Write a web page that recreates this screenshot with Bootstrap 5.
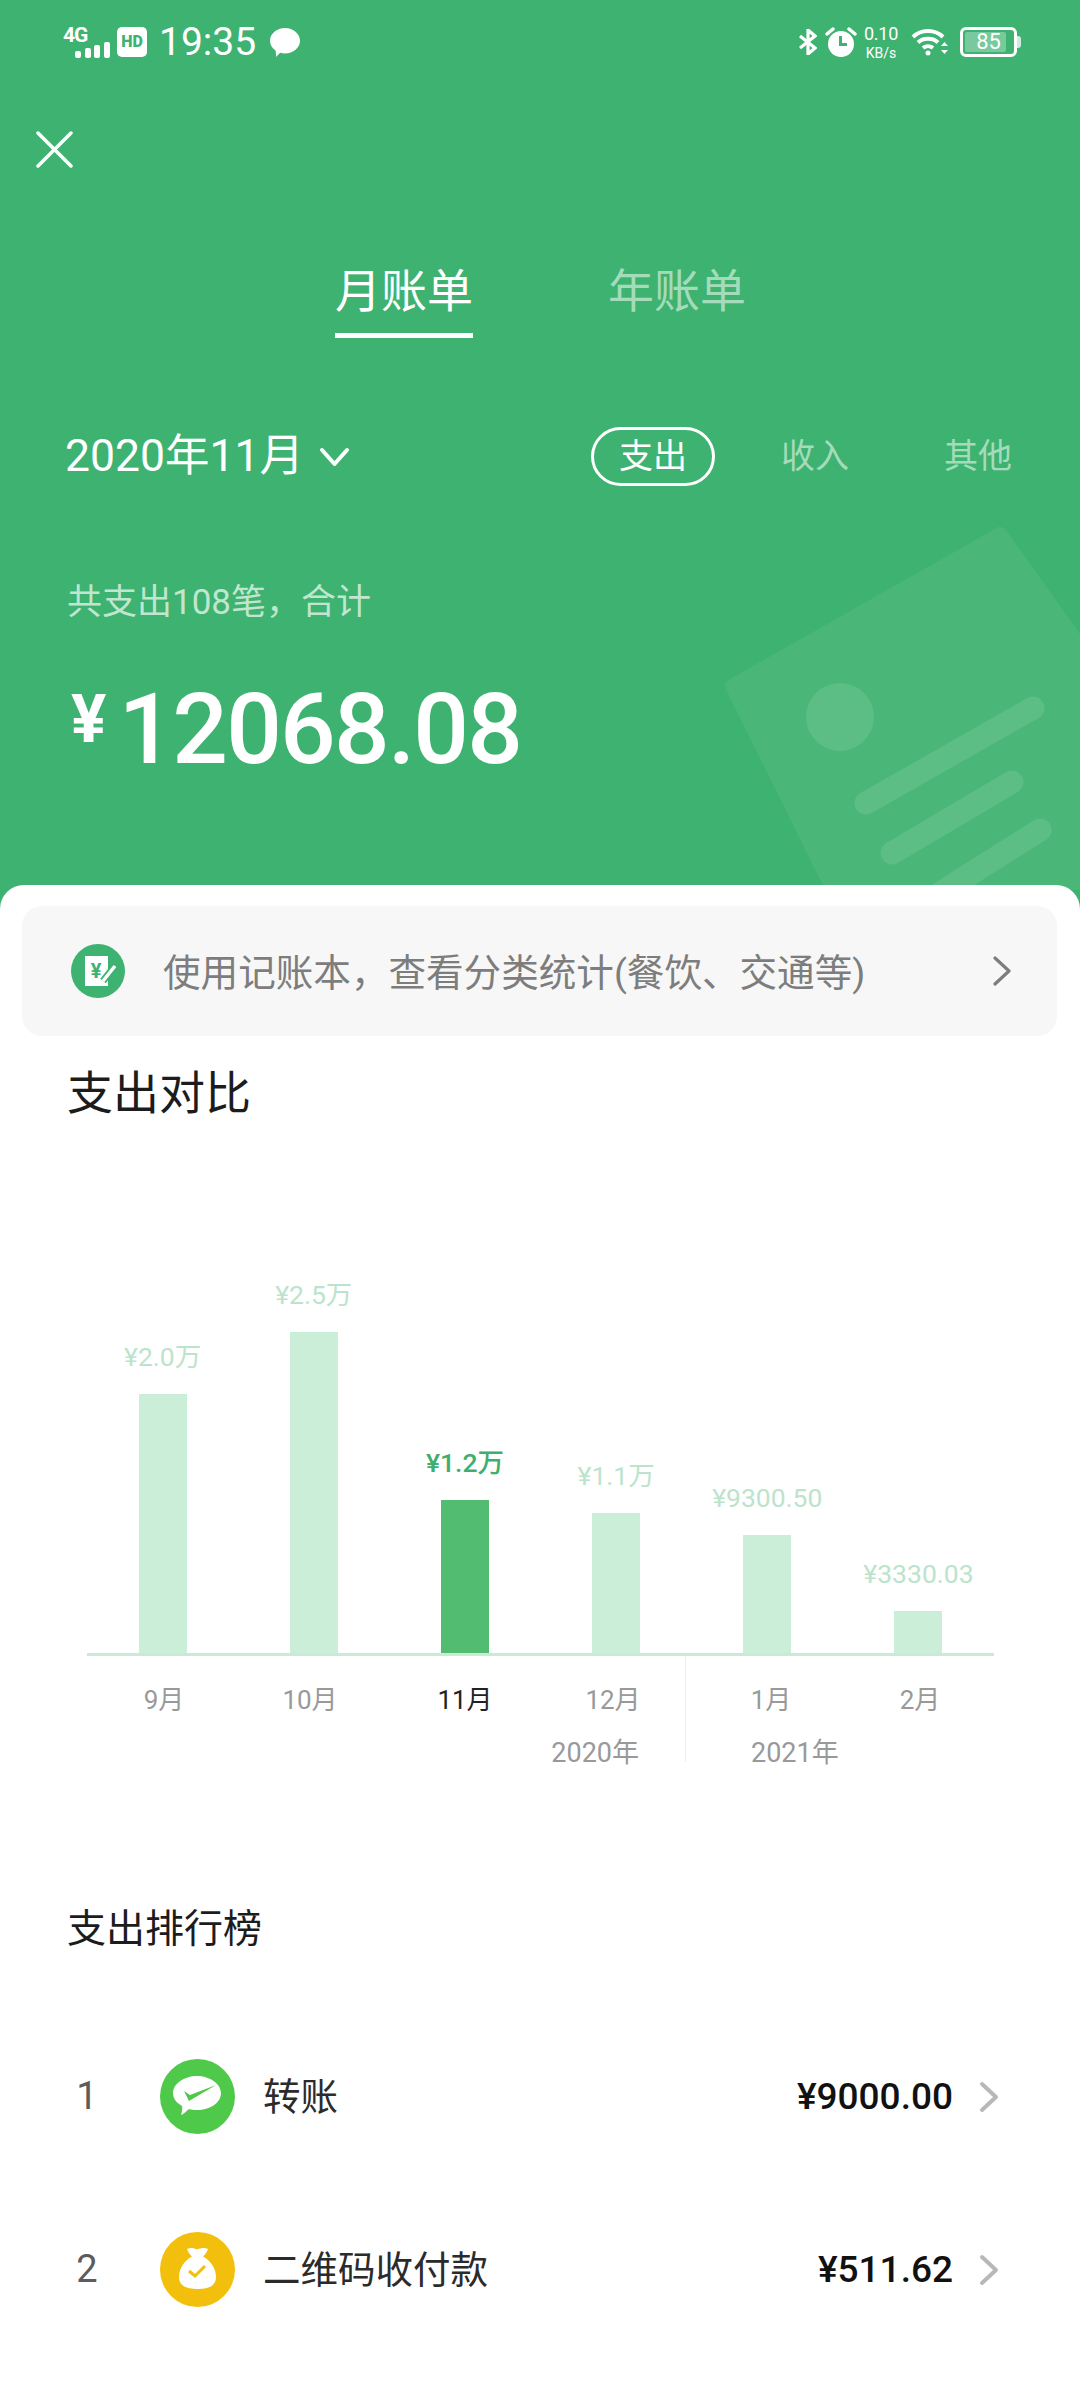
<!DOCTYPE html>
<html lang="zh">
<head>
    <meta charset="UTF-8">
    <meta name="viewport" content="width=device-width, initial-scale=1.0">
    <link href="https://cdn.jsdelivr.net/npm/bootstrap@5.3.3/dist/css/bootstrap.min.css" rel="stylesheet">
    <title>月账单</title>
    <style>
        body { width: 1080px; height: 2400px; overflow: hidden; background: #fff; font-family: Roboto, "Noto Sans CJK SC", sans-serif; }
        .bill-top { height: 910px; background: #3eb270; color: #fff; overflow: hidden; }
        .decor { left: 700px; top: 510px; }
        .top-content { z-index: 1; }

        .status-bar { height: 84px; padding: 0 59px 0 63px; }
        .net-box { width: 47px; height: 31px; margin-right: 7px; }
        .net-text { font-size: 21px; font-weight: 700; line-height: 16px; letter-spacing: -1px; left: 0; top: 0; }
        .net-bars { left: 12px; bottom: 0; }
        .hd-box { width: 30px; height: 30px; background: #fff; color: #3eb270; border-radius: 5px; font-size: 16px; font-weight: 900; line-height: 30px; text-align: center; margin-right: 12px; }
        .clock-text { font-size: 39px; line-height: 44px; margin-right: 14px; }
        .speed { width: 34px; margin: 0 13px 0 7px; line-height: 1; }
        .speed-num { font-size: 18px; letter-spacing: -.3px; }
        .speed-unit { font-size: 14px; margin-top: 3px; white-space: nowrap; }
        .batt { width: 57px; height: 30px; border: 3px solid #fff; border-radius: 6px; margin-left: 12px; padding: 2px; }
        .batt-fill { left: 2px; top: 2px; bottom: 2px; width: 41px; background: rgba(255,255,255,.3); border-radius: 2px; }
        .batt-num { font-size: 22px; line-height: 20px; z-index: 1; }
        .batt-nub { width: 4px; height: 12px; background: rgba(255,255,255,.75); border-radius: 0 3px 3px 0; }

        .close-row { margin: 47px 0 0 36px; height: 37px; }
        .tab-row { margin-top: 98px; gap: 135px; padding-left: 1px; }
        .tab-item { font-size: 46px; line-height: 50px; text-align: center; width: 138px; color: #a4dcbb; }
        .tab-item.on { color: #fff; }
        .tab-line { height: 5px; margin-top: 17px; }
        .tab-item.on .tab-line { background: #fff; }
        .filter-row { margin-top: 89px; height: 59px; padding: 0 68px 0 65px; }
        .date-text { font-size: 44.500px; line-height: 59px; margin-right: 15px; }
        .type-pill { width: 124px; height: 59px; border: 3px solid #fff; border-radius: 30px; font-size: 34px; line-height: 52px; text-align: center; }
        .type-off { font-size: 34px; line-height: 59px; color: #a4dcbb; margin-left: 66px; }
        .type-off.last { margin-left: 95px; }
        .sum-text { margin: 95px 0 0 67px; font-size: 35px; line-height: 44px; color: #c0e6cf; }
        .amount-row { margin: 56px 0 0 71px; }
        .yen-big { font-size: 66px; line-height: 66px; font-weight: 700; margin: 6px 12px 0 0; }
        .amount-big { font-size: 98px; line-height: 98px; font-weight: 500; letter-spacing: -1.8px; }

        .sheet { margin-top: -25px; background: #fff; border-radius: 24px 24px 0 0; padding-top: 21px; height: 1515px; }
        .book-bar { height: 130px; margin: 0 23px 0 22px; background: #f7f7f7; border-radius: 20px; padding: 0 46px 0 49px; }
        .book-text { font-size: 37.600px; line-height: 50px; color: #7d7d7d; margin-left: 38px; padding-top: 4px; }
        .block-title { font-size: 46px; line-height: 60px; margin: 27px 0 0 67px; color: #1c1c1c; }

        .chart { height: 533px; margin: 0 86px 0 87px; border-bottom: 3px solid #cbe9d7; }
        .chart-col { width: 151.200px; }
        .chart-val { font-size: 26.500px; line-height: 32px; margin-bottom: 21px; color: #bce3cb; white-space: nowrap; }
        .chart-bar { width: 48px; background: #cbeed9; }
        .chart-col.on .chart-val { color: #3fae6f; font-weight: 500; }
        .chart-col.on .chart-bar { background: #52bd70; }
        .axis { margin-left: 87px; }
        .axis-left { width: 599px; height: 106px; border-right: 1px solid #efefef; }
        .axis-right { width: 308px; height: 106px; }
        .month-grid { display: grid; padding-top: 28px; font-size: 26px; line-height: 32px; color: #999; text-align: center; }
        .month-grid.left { grid-template-columns: 154px 138px 172px 124px; }
        .month-grid.right { grid-template-columns: 170px 128px; }
        .month-grid .now { color: #222; }
        .year-text { font-size: 27px; line-height: 32px; margin-top: 21px; color: #999; }
        .axis-left .year-text { text-align: right; padding-right: 46px; }
        .axis-right .year-text { padding-left: 65px; }

        .rank-title { font-size: 39px; line-height: 56px; margin: 139px 0 0 67px; color: #1c1c1c; }
        .rank-list { margin-top: 53px; }
        .rank-row { height: 173px; padding: 0 81px 0 68px; border: 0; }
        .rank-num { width: 38px; margin-right: 54px; font-size: 38px; color: #5c5c5c; text-align: center; }
        .rank-name { font-size: 37.500px; line-height: 50px; margin-left: 28px; color: #2b2b2b; }
        .rank-money { font-size: 37px; line-height: 50px; font-weight: 500; color: #111; margin-right: 26px; }
    </style>
</head>
<body>
    <div class="bill-top position-relative">
        <svg class="decor position-absolute" width="380" height="380" viewBox="700 510 380 380">
            <path d="M1000 534 L1090 660 V900 H838 L732 686 Z" fill="#fff" stroke="#fff" stroke-width="14" stroke-linejoin="round" opacity=".06" />
            <circle cx="840" cy="717" r="34" fill="#fff" fill-opacity=".1" />
            <g stroke="#fff" stroke-opacity=".1" stroke-width="23" stroke-linecap="round">
                <line x1="866" y1="803" x2="1033" y2="708" />
                <line x1="892" y1="853" x2="1012" y2="782" />
                <line x1="937" y1="895" x2="1040" y2="830" />
            </g>
        </svg>

        <div class="top-content position-relative">
            <div class="status-bar d-flex align-items-center">
                <div class="net-box position-relative flex-shrink-0">
                    <span class="net-text position-absolute">4G</span>
                    <svg class="net-bars position-absolute" width="35" height="16" viewBox="0 0 35 16" fill="#fff">
                        <rect x="0" y="9" width="6" height="7" rx="2" />
                        <rect x="10" y="6" width="6" height="10" rx="2" />
                        <rect x="19" y="3" width="6" height="13" rx="2" />
                        <rect x="29" y="0" width="6" height="16" rx="2" />
                    </svg>
                </div>
                <span class="hd-box flex-shrink-0">HD</span>
                <span class="clock-text">19:35</span>
                <svg width="30" height="29" viewBox="0 0 30 29" fill="#fff">
                    <path d="M15 0C23.300 0 30 5.700 30 12.800C30 19.800 23.300 25.500 15 25.500C13.300 25.500 11.700 25.300 10.200 24.800C8.500 26.800 6.600 28 6 29C6 26.800 6 24.500 5.500 22.500C2.100 20.200 0 16.700 0 12.800C0 5.700 6.700 0 15 0Z" />
                </svg>

                <svg class="ms-auto" width="18" height="26" viewBox="0 0 18 26" fill="none" stroke="#fff" stroke-width="3.200">
                    <path d="M1 7L16 19L9 25V1L16 7L1 19" />
                </svg>
                <svg class="ms-2" width="32" height="30" viewBox="0 0 32 30">
                    <circle cx="16" cy="17" r="13" fill="#fff" />
                    <path d="M15.500 9V17.500H22" fill="none" stroke="#3eb270" stroke-width="3" />
                    <path d="M2 7L8 2M30 7L24 2" stroke="#fff" stroke-width="3.500" stroke-linecap="round" />
                </svg>
                <div class="speed text-center flex-shrink-0">
                    <div class="speed-num">0.10</div>
                    <div class="speed-unit">KB/s</div>
                </div>
                <svg width="37" height="28" viewBox="0 0 37 28" fill="none" stroke="#fff" stroke-width="4">
                    <path d="M2 9C10 1 24 1 32 9" />
                    <path d="M7 14.500C12 9.500 22 9.500 27 14.500" />
                    <path d="M12 20C15 17.500 19 17.500 22 20" />
                    <circle cx="17" cy="25" r="2.500" fill="#fff" stroke="none" />
                    <path d="M30 18L33.500 14L37 18ZM30 22L33.500 26L37 22Z" fill="#fff" stroke="none" />
                </svg>
                <div class="batt position-relative d-flex align-items-center justify-content-center flex-shrink-0">
                    <span class="batt-fill position-absolute"></span>
                    <span class="batt-num position-relative">85</span>
                </div>
                <span class="batt-nub flex-shrink-0"></span>
            </div>

            <div class="close-row">
                <svg class="d-block" width="37" height="37" viewBox="0 0 37 37" stroke="#fff" stroke-width="3.500" stroke-linecap="round">
                    <line x1="2" y1="2" x2="35" y2="35" />
                    <line x1="35" y1="2" x2="2" y2="35" />
                </svg>
            </div>

            <div class="tab-row d-flex justify-content-center">
                <div class="tab-item on">月账单<div class="tab-line"></div></div>
                <div class="tab-item">年账单<div class="tab-line"></div></div>
            </div>

            <div class="filter-row d-flex align-items-center">
                <span class="date-text">2020年11月</span>
                <svg width="31" height="20" viewBox="0 0 31 20" fill="none" stroke="#fff" stroke-width="4" stroke-linecap="round" stroke-linejoin="round">
                    <path d="M3 3L15.500 17L28 3" />
                </svg>
                <span class="type-pill ms-auto">支出</span>
                <span class="type-off">收入</span>
                <span class="type-off last">其他</span>
            </div>

            <div class="sum-text">共支出108笔，合计</div>
            <div class="amount-row d-flex align-items-start">
                <span class="yen-big">¥</span>
                <span class="amount-big">12068.08</span>
            </div>
        </div>
    </div>

    <div class="sheet position-relative">
        <div class="book-bar d-flex align-items-center">
            <svg class="flex-shrink-0" width="54" height="54" viewBox="0 0 54 54">
                <circle cx="27" cy="27" r="27" fill="#3eb270" />
                <rect x="14" y="12" width="23" height="30" fill="#fff" />
                <text x="25" y="34" font-size="20" font-weight="700" text-anchor="middle" fill="#3eb270" font-family="Roboto, sans-serif">¥</text>
                <path d="M32 37L44 22" stroke="#3eb270" stroke-width="7" />
                <path d="M32 37L44 22" stroke="#fff" stroke-width="3.500" />
            </svg>
            <span class="book-text">使用记账本，查看分类统计(餐饮、交通等)</span>
            <svg class="ms-auto" width="18" height="30" viewBox="0 0 18 30" fill="none" stroke="#7d7d7d" stroke-width="3.200" stroke-linecap="round" stroke-linejoin="round">
                <path d="M2 2L16 15L2 28" />
            </svg>
        </div>

        <div class="block-title">支出对比</div>

        <div class="chart d-flex align-items-end">
            <div class="chart-col d-flex flex-column align-items-center">
                <span class="chart-val">¥2.0万</span>
                <div class="chart-bar" style="height: 259px"></div>
            </div>
            <div class="chart-col d-flex flex-column align-items-center">
                <span class="chart-val">¥2.5万</span>
                <div class="chart-bar" style="height: 321px"></div>
            </div>
            <div class="chart-col on d-flex flex-column align-items-center">
                <span class="chart-val">¥1.2万</span>
                <div class="chart-bar" style="height: 153px"></div>
            </div>
            <div class="chart-col d-flex flex-column align-items-center">
                <span class="chart-val">¥1.1万</span>
                <div class="chart-bar" style="height: 140px"></div>
            </div>
            <div class="chart-col d-flex flex-column align-items-center">
                <span class="chart-val">¥9300.50</span>
                <div class="chart-bar" style="height: 118px"></div>
            </div>
            <div class="chart-col d-flex flex-column align-items-center">
                <span class="chart-val">¥3330.03</span>
                <div class="chart-bar" style="height: 42px"></div>
            </div>
        </div>

        <div class="axis d-flex">
            <div class="axis-left">
                <div class="month-grid left">
                    <span>9月</span><span>10月</span><span class="now">11月</span><span>12月</span>
                </div>
                <div class="year-text">2020年</div>
            </div>
            <div class="axis-right">
                <div class="month-grid right">
                    <span>1月</span><span>2月</span>
                </div>
                <div class="year-text">2021年</div>
            </div>
        </div>

        <div class="rank-title">支出排行榜</div>

        <div class="rank-list list-group list-group-flush">
            <div class="rank-row list-group-item d-flex align-items-center">
                <span class="rank-num">1</span>
                <svg class="flex-shrink-0" width="75" height="75" viewBox="0 0 75 75">
                    <circle cx="37.500" cy="37.500" r="37.500" fill="#4fc94a" />
                    <path d="M37 17C50 17 61 25 61 34C61 44 50 51 37 51C34 51 31 50.600 29 50C26 52 24 55 21 56C22 53 22.500 50 22 47C17 44 13 40 13 34C13 25 24 17 37 17Z" fill="#fff" />
                    <path d="M24 32L29 42L56 26L30 36Z" fill="#4fc94a" />
                </svg>
                <span class="rank-name">转账</span>
                <span class="rank-money ms-auto">¥9000.00</span>
                <svg class="flex-shrink-0" width="20" height="32" viewBox="0 0 20 32" fill="none" stroke="#b8b8b8" stroke-width="4" stroke-linecap="round" stroke-linejoin="round">
                    <path d="M3 3L17 16L3 29" />
                </svg>
            </div>
            <div class="rank-row list-group-item d-flex align-items-center">
                <span class="rank-num">2</span>
                <svg class="flex-shrink-0" width="75" height="75" viewBox="0 0 75 75">
                    <circle cx="37.500" cy="37.500" r="37.500" fill="#f2c00c" />
                    <path d="M27 17C31 15.500 33 16 37 17.500C41 16 45 15.500 48 17C47 20 45 23 43 24.500C50 28 56 36 56 45C56 53 50 57 38 57C25 57 19 53 19 45C19 36 25 28 32 24.500C30 23 28 20 27 17Z" fill="#fff" />
                    <path d="M29 39L35 44L45 34" fill="none" stroke="#f2c00c" stroke-width="3" />
                </svg>
                <span class="rank-name">二维码收付款</span>
                <span class="rank-money ms-auto">¥511.62</span>
                <svg class="flex-shrink-0" width="20" height="32" viewBox="0 0 20 32" fill="none" stroke="#b8b8b8" stroke-width="4" stroke-linecap="round" stroke-linejoin="round">
                    <path d="M3 3L17 16L3 29" />
                </svg>
            </div>
        </div>
    </div>

    <script src="https://cdn.jsdelivr.net/npm/bootstrap@5.3.3/dist/js/bootstrap.bundle.min.js"></script>
</body>
</html>
